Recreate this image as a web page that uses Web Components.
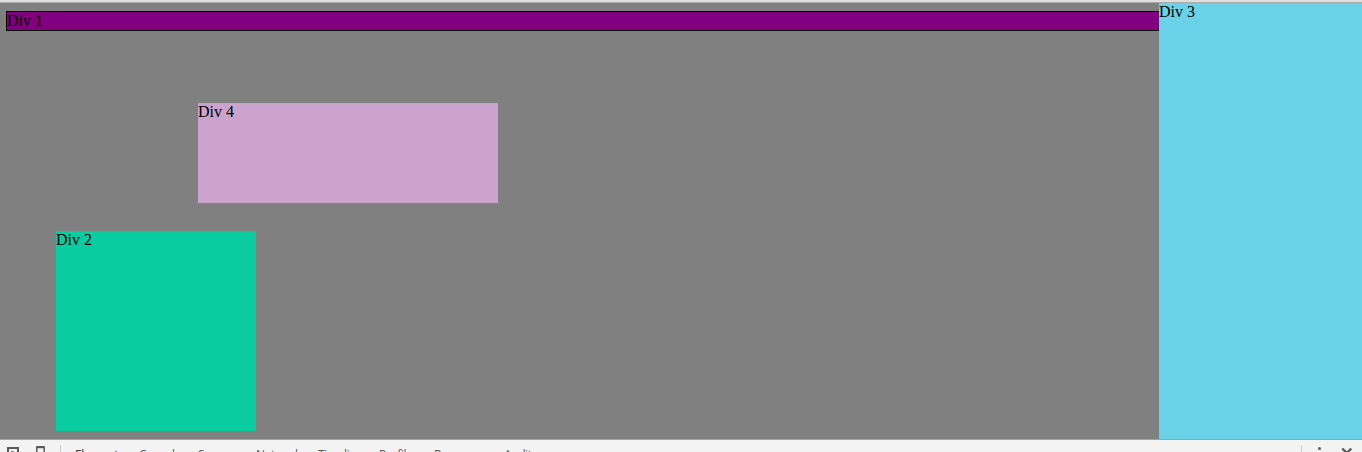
<!DOCTYPE html>
<html lang="en">
<head>
<meta charset="utf-8">
<title>Div positioning</title>
<style>
html, body { margin: 0; height: 100%; overflow: hidden; }
body { font: 16px/18px "Liberation Serif", serif; color: #000; }
</style>
</head>
<body>
<demo-window></demo-window>
<script>
const define = (name, html) => customElements.define(name, class extends HTMLElement {
  constructor() {
    super();
    this.attachShadow({ mode: 'open' }).innerHTML = html;
  }
});

define('color-box', `
<style>
:host { display: block; box-sizing: border-box; }
</style>
<slot></slot>`);

define('demo-page', `
<style>
:host { display: grid; grid-template-columns: minmax(0, 1fr) 203px; background: #808080; overflow: hidden; }
main { padding: 8px 0 0 6px; }
.one { height: 20px; background: #800080; border: 1px solid #000; border-right: 0; }
.four { width: 300px; height: 100px; margin: 72px 0 0 192px; background: #cca3cc; }
.two { width: 200px; height: 200px; margin: 28px 0 0 50px; background: #0acca1; }
.three { background: #69d2e7; }
</style>
<main>
<color-box class="one">Div 1</color-box>
<color-box class="four">Div 4</color-box>
<color-box class="two">Div 2</color-box>
</main>
<color-box class="three">Div 3</color-box>`);

define('tool-tab', `
<style>
:host { display: block; white-space: nowrap; }
</style>
<slot></slot>`);

define('dev-tools', `
<style>
:host { display: flex; align-items: flex-start; background: #f3f3f3; border-top: 1px solid #a3a3a3; overflow: hidden;
  color: #5a5a5a; font: 12px/16px "Open Sans", "Noto Sans", sans-serif; }
svg { display: block; flex: none; fill: none; stroke: #5a5a5a; stroke-width: 2; }
.inspect { margin: 7px 0 0 7px; }
.device { margin: 6px 0 0 17px; }
.rule { width: 1px; height: 20px; margin-top: 5px; background: #ccc; flex: none; }
.first { margin-left: 14px; }
nav { display: grid; grid-template-columns: 64px 59px 58px 62px 61px 55px 70px 60px; margin: 7px 0 0 14px; letter-spacing: -.4px; }
.active { color: #333; }
.last { margin-left: auto; }
.more { margin: 7px 0 0 15px; fill: #5a5a5a; stroke: none; }
.close { margin: 8px 10px 0 20px; }
</style>
<svg class="inspect" width="12" height="12" viewBox="0 0 12 12"><path d="M4 11H1V1h10v4"/><path d="M4 3.5l7 3-3 1-1 3z" fill="#5a5a5a" stroke="none"/></svg>
<svg class="device" width="10" height="14" viewBox="0 0 10 14"><path d="M.8 1v11h7.4V1" stroke-width="1.5"/><path d="M.2 1h8.6" stroke-width="2.4"/></svg>
<span class="rule first"></span>
<nav>
<tool-tab class="active">Elements</tool-tab><tool-tab>Console</tool-tab><tool-tab>Sources</tool-tab><tool-tab>Network</tool-tab><tool-tab>Timeline</tool-tab><tool-tab>Profiles</tool-tab><tool-tab>Resources</tool-tab><tool-tab>Audits</tool-tab>
</nav>
<span class="rule last"></span>
<svg class="more" width="4" height="14" viewBox="0 0 4 14"><circle cx="2.5" cy="1.5" r="1.5"/><circle cx="2.5" cy="6.5" r="1.5"/><circle cx="2.5" cy="11.5" r="1.5"/></svg>
<svg class="close" width="11" height="10" viewBox="0 0 11 10"><path d="M1.3 .5l9 9m0-9l-9 9" stroke-width="2.3"/></svg>`);

define('demo-window', `
<style>
:host { display: grid; grid-template-rows: 3px 436px minmax(0, 1fr); height: 100vh; }
header { background: #dfdfdf; border-bottom: 1px solid #aaa; }
</style>
<header></header>
<demo-page></demo-page>
<dev-tools></dev-tools>`);
</script>
</body>
</html>
